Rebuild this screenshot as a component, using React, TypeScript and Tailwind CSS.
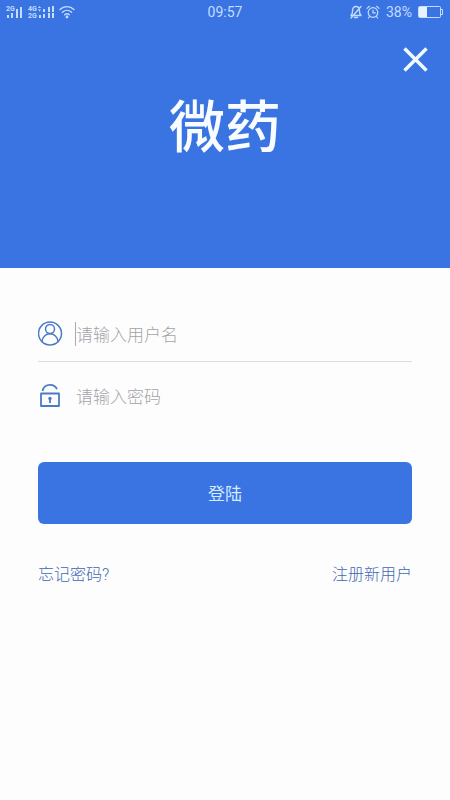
import type { ReactNode } from "react";

function SignalIcon() {
  return (
    <svg viewBox="0 0 17 14" className="w-[17px] h-3.5" fill="currentColor" aria-hidden="true">
      <text x="0" y="6" fontSize="7" fontWeight="bold">
        2G
      </text>
      <rect x="1" y="10" width="2" height="3" />
      <rect x="5" y="8" width="2" height="5" />
      <rect x="10" y="4" width="2" height="9" />
      <rect x="14" y="2" width="2" height="11" />
    </svg>
  );
}

function DualSignalIcon() {
  return (
    <svg viewBox="0 0 28 14" className="w-7 h-3.5" fill="currentColor" aria-hidden="true">
      <text x="1" y="6" fontSize="7" fontWeight="bold">
        4G
      </text>
      <text x="1" y="13" fontSize="7" fontWeight="bold">
        2G
      </text>
      <path d="M11 3l1.500-2L14 3zM11 4.500h3L12.500 6.500z" />
      <path d="M12 10h2v3h-2zM16 9h2v4h-2zM21 8h2v5h-2zM25 8h2v5h-2z" />
      <path d="M16 4h2v3h-2zM21 2h2v5h-2zM25 1h2v6h-2z" />
    </svg>
  );
}

function WifiIcon() {
  return (
    <svg
      viewBox="0 0 16 14"
      className="w-4 h-3.5"
      fill="none"
      stroke="currentColor"
      strokeWidth="1.4"
      strokeLinecap="round"
      aria-hidden="true"
    >
      <path d="M1 4.600C5 .6 11 .6 15 4.600M3.400 7.300c2.700-2.600 6.500-2.600 9.200 0M5.700 9.800c1.400-1.300 3.200-1.300 4.600 0" />
      <circle cx="8" cy="12" r=".7" fill="currentColor" />
    </svg>
  );
}

function MutedBellIcon() {
  return (
    <svg
      viewBox="0 0 14 14"
      className="w-3.5 h-3.5"
      fill="none"
      stroke="currentColor"
      strokeWidth="1.4"
      strokeLinecap="round"
      strokeLinejoin="round"
      aria-hidden="true"
    >
      <path d="M2 10.500h10c-1.200-1-1.600-2-1.600-5C10.400 3 9 1.500 7 1.500S3.600 3 3.600 5.500c0 3-.4 4-1.600 5zM5.500 12.500h3M2 13L12 1.500" />
    </svg>
  );
}

function AlarmIcon() {
  return (
    <svg
      viewBox="0 0 14 14"
      className="w-3.5 h-3.5"
      fill="none"
      stroke="currentColor"
      strokeWidth="1.2"
      strokeLinecap="round"
      aria-hidden="true"
    >
      <circle cx="7" cy="7.500" r="4.800" />
      <path d="M7 5v2.800h2.300M1 3.400L3.400 1.300M13 3.400l-2.400-2.100M3.500 11.500L2.400 13M10.500 11.500l1.100 1.500" />
    </svg>
  );
}

function BatteryIcon() {
  return (
    <svg viewBox="0 0 26 12" className="w-[26px] h-3" aria-hidden="true">
      <rect x=".5" y=".5" width="22" height="11" rx="1" fill="none" stroke="currentColor" />
      <rect x="1" y="1" width="8" height="10" fill="#e6f3ff" />
      <path d="M23 3.500h1.500v5H23" fill="none" stroke="currentColor" />
    </svg>
  );
}

function UserIcon() {
  return (
    <svg
      viewBox="0 0 26 26"
      className="w-[26px] h-[26px]"
      fill="none"
      stroke="currentColor"
      strokeWidth="1.5"
      aria-hidden="true"
    >
      <circle cx="12" cy="12.500" r="11.500" />
      <circle cx="12" cy="8" r="4.500" />
      <path d="M3.800 20.800c.6-4.800 4-8 8.200-8s7.600 3.200 8.200 8" />
    </svg>
  );
}

function LockIcon() {
  return (
    <svg
      viewBox="0 0 26 26"
      className="w-[26px] h-[26px]"
      fill="none"
      stroke="currentColor"
      strokeWidth="1.800"
      strokeLinejoin="round"
      aria-hidden="true"
    >
      <path d="M3 10.500h18V23H3z" />
      <path d="M4.500 8C5.300 4.300 8.300 1.800 12 1.800c3.200 0 5.800 1.600 7 4.400" />
      <circle cx="12" cy="15.500" r="1.700" fill="currentColor" stroke="none" />
      <path d="M12 15.500v4.500" />
    </svg>
  );
}

type FieldProps = {
  id: string;
  label: string;
  type: string;
  icon: ReactNode;
  active?: boolean;
};

function Field({ id, label, type, icon, active }: FieldProps) {
  return (
    <>
      <label htmlFor={id} aria-label={label} className="text-[#4a7bc8]">
        {icon}
      </label>
      <div className="flex flex-auto items-center ml-[11px]">
        <span className={active ? "w-px h-6 bg-[#a9a9b2]" : "w-px h-6"} />
        <input
          id={id}
          type={type}
          placeholder={label}
          className="flex-auto min-w-0 pt-0.5 bg-transparent text-[17px] leading-6 font-light outline-none placeholder:text-[#a5a2a8]"
        />
      </div>
    </>
  );
}

function StatusBar() {
  return (
    <div className="grid grid-cols-3 items-center h-6 px-1.5 text-[#c3dcff]">
      <div className="flex items-center gap-1">
        <SignalIcon />
        <DualSignalIcon />
        <WifiIcon />
      </div>
      <span className="text-center text-sm">09:57</span>
      <div className="flex items-center justify-end gap-[3px]">
        <MutedBellIcon />
        <AlarmIcon />
        <span className="mx-[3px] text-sm">38%</span>
        <BatteryIcon />
      </div>
    </div>
  );
}

function App() {
  return (
    <div className="min-h-screen bg-[#fdfdfd] font-['Roboto','Noto_Sans_CJK_SC',sans-serif]">
      <header className="h-[268px] bg-[#3974e2]">
        <StatusBar />
        <div className="flex justify-end pt-5 px-5">
          <button type="button" aria-label="关闭" className="text-[#f0faff]">
            <svg
              viewBox="0 0 30 30"
              className="w-[30px] h-[30px]"
              fill="none"
              stroke="currentColor"
              strokeWidth="3.5"
              aria-hidden="true"
            >
              <path d="M4.500 4.500l22 22M26.500 4.500L4.500 26.500" />
            </svg>
          </button>
        </div>
        <h1 className="mt-[18px] text-center text-[56px] leading-[72px] font-medium text-[#f8fcff]">
          微药
        </h1>
      </header>
      <form className="px-[38px] pt-[38px]" onSubmit={(e) => e.preventDefault()}>
        <div className="flex items-center h-14 border-b border-[#dcdce0]">
          <Field id="username" label="请输入用户名" type="text" icon={<UserIcon />} active />
        </div>
        <div className="flex items-center h-[68px]">
          <Field id="password" label="请输入密码" type="password" icon={<LockIcon />} />
        </div>
        <button
          type="submit"
          className="w-full h-[62px] mt-8 pt-1 rounded-md bg-[#3974e2] text-[17px] text-[#d5e9ff]"
        >
          登陆
        </button>
        <div className="flex justify-between mt-[39px] text-base font-light text-[#3f68b4]">
          <a href="#forgot">忘记密码?</a>
          <a href="#register">注册新用户</a>
        </div>
      </form>
    </div>
  );
}

export default App;
